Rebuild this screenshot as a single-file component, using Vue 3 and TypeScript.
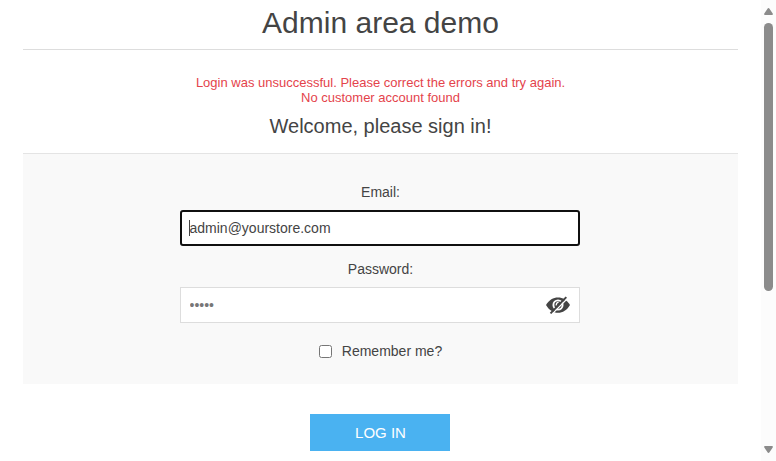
<script setup lang="ts">
import { ref } from 'vue'

const email = ref('admin@yourstore.com')
const password = ref('admin')
const remember = ref(false)
const showPassword = ref(false)
const errors: string[] = [
  'Login was unsuccessful. Please correct the errors and try again.',
  'No customer account found',
]
</script>

<template>
  <div class="window">
    <main class="page">
      <h1 class="page-title">Admin area demo</h1>
      <form @submit.prevent>
        <div class="errors">
          <div v-for="message in errors" :key="message">{{ message }}</div>
        </div>
        <h2 class="welcome">Welcome, please sign in!</h2>
        <div class="fields">
          <label class="label" for="email">Email:</label>
          <div class="field">
            <input id="email" v-model="email" class="input active" type="text" />
            <span class="caret"></span>
          </div>
          <label class="label second" for="password">Password:</label>
          <div class="field">
            <input id="password" v-model="password" class="input muted" :type="showPassword ? 'text' : 'password'" />
            <button class="eye" type="button" aria-label="Show password" @click="showPassword = !showPassword">
              <svg width="24" height="18" viewBox="0 0 24 18">
                <path d="M0 9C3 3.8 7.3 1.4 12 1.4S21 3.8 24 9C21 14.2 16.7 16.8 12 16.8S3 14.2 0 9Z" fill="#444" />
                <circle cx="12" cy="9" r="4.6" fill="none" stroke="#fff" stroke-width="1.9" />
                <path d="M10.2 9.6C10.2 7.6 11 6.4 12.6 6.2" fill="none" stroke="#fff" stroke-width="1.3" />
                <path d="M6 18 21.6 2.2" stroke="#fff" stroke-width="1.4" />
                <path d="M4.5 17.4 20.3 1.2" stroke="#444" stroke-width="1.9" />
              </svg>
            </button>
          </div>
          <label class="remember">
            <input v-model="remember" class="checkbox" type="checkbox" />
            <span>Remember me?</span>
          </label>
        </div>
        <button class="login" type="submit">LOG IN</button>
      </form>
    </main>
    <aside class="scrollbar">
      <svg class="arrow" width="9" height="7" viewBox="0 0 9 7">
        <path d="M4.5 0C5 0 5.2.3 5.5.7L8.7 5.6C9.2 6.4 8.8 7 8 7H1C.2 7-.2 6.4.3 5.6L3.5.7C3.8.3 4 0 4.5 0Z" fill="#8b8b8b" />
      </svg>
      <div class="thumb"></div>
      <svg class="arrow down" width="9" height="7" viewBox="0 0 9 7">
        <path d="M4.5 7C5 7 5.2 6.7 5.5 6.3L8.7 1.4C9.2.6 8.8 0 8 0H1C.2 0-.2.6.3 1.4L3.5 6.3C3.8 6.7 4 7 4.5 7Z" fill="#8b8b8b" />
      </svg>
    </aside>
  </div>
</template>

<style>
body {
  background: #fff;
  overflow: hidden;
}
</style>

<style scoped>
.window {
  display: flex;
  height: 461px;
  overflow: hidden;
  color: #444;
  font: 14px/16px "Liberation Sans", Arial, sans-serif;
}
.page {
  flex: 1;
  padding: 0 23px;
  text-align: center;
}
.page-title {
  box-sizing: border-box;
  height: 50px;
  margin: 0 0 25px;
  padding-top: 5px;
  border-bottom: 1px solid #ddd;
  font-size: 30px;
  font-weight: 400;
  line-height: 35px;
}
.errors {
  color: #e4434b;
  font-size: 13px;
  line-height: 15px;
}
.welcome {
  margin: 0;
  padding: 10px 0 16px;
  font-size: 20px;
  font-weight: 400;
  line-height: 22px;
}
.fields {
  box-sizing: border-box;
  display: flex;
  flex-direction: column;
  align-items: center;
  height: 231px;
  padding-top: 30px;
  border-top: 1px solid #e4e4e4;
  background: #f9f9f9;
}
.label {
  margin-bottom: 10px;
}
.second {
  margin-top: 15px;
}
.field {
  position: relative;
  display: flex;
  width: 400px;
  margin-right: 1px;
}
.input {
  box-sizing: border-box;
  width: 100%;
  height: 36px;
  margin: 0;
  padding: 0 8.5px;
  border: 1px solid #ddd;
  outline: none;
  background: #fff;
  color: #444;
  font: inherit;
}
.active {
  padding: 0 7.5px;
  border: 2px solid #101010;
  border-radius: 3px;
}
.muted {
  color: #777;
}
.caret {
  position: absolute;
  top: 10px;
  left: 9px;
  width: 1px;
  height: 16px;
  background: #444;
}
.eye {
  position: absolute;
  top: 9px;
  right: 10px;
  display: flex;
  padding: 0;
  border: 0;
  background: none;
}
.remember {
  display: flex;
  align-items: center;
  gap: 10px;
  margin-top: 20px;
}
.checkbox {
  width: 13px;
  height: 13px;
  margin: 0;
}
.login {
  display: block;
  width: 140px;
  height: 37px;
  margin: 30px 0 0 287px;
  padding: 0 0 0 1px;
  border: 0;
  background: #4ab2f1;
  color: #fff;
  font: 15px "Liberation Sans", Arial, sans-serif;
}
.scrollbar {
  box-sizing: border-box;
  display: flex;
  flex-direction: column;
  align-items: center;
  width: 15px;
  padding: 8px 0;
  background: #fcfcfc;
}
.thumb {
  width: 9px;
  height: 268px;
  margin-top: 8px;
  border-radius: 5px;
  background: #8b8b8b;
}
.down {
  margin-top: auto;
}
</style>
